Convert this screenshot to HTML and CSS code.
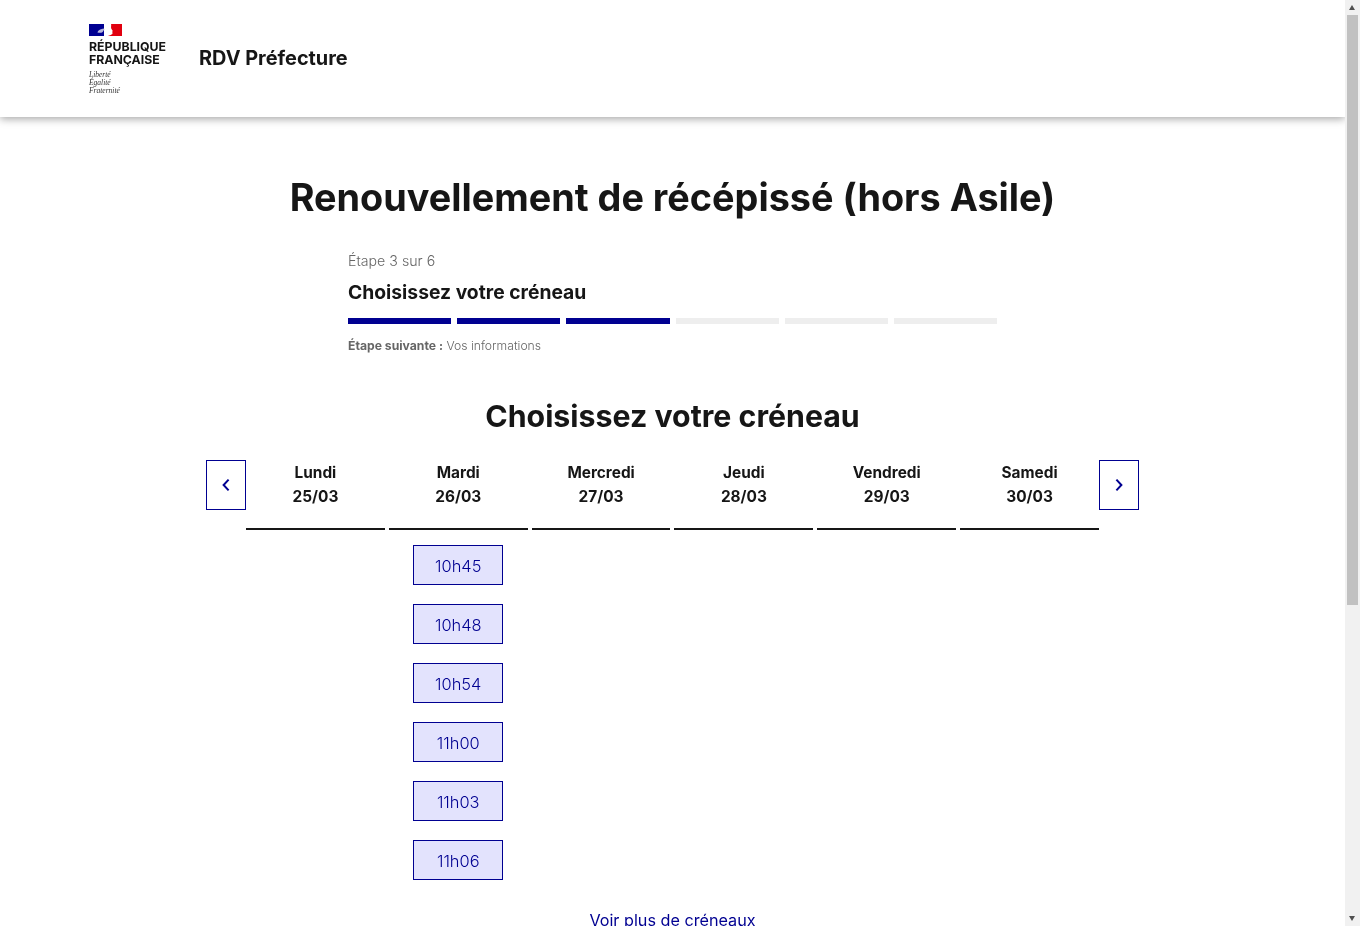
FILE: index.html
```html
<!DOCTYPE html>
<html lang="fr">
<head>
	<meta charset="utf-8">
	<meta name="viewport" content="width=device-width, initial-scale=1">
	<title>RDV Préfecture</title>
	<link rel="stylesheet" href="styles.css">
</head>
<body>
	<div class="page">
		<div class="content">
			<header class="header">
				<div class="logo">
					<svg class="flag" width="33" height="12" viewBox="0 0 33 12">
						<rect width="33" height="12" fill="#fff"/>
						<rect width="15" height="12" fill="#000091"/>
						<path d="M22 0H33V12H19C20.500 11 23.500 10.600 23.500 9.400L23.300 8.400C23.700 8.200 23.500 7.600 23.300 7.200C23.700 7 23.900 6.600 23.100 6L22.100 4.200C21.900 2.600 22.500 1 22 0Z" fill="#e1000f"/>
						<path d="M9 7.200C10 5.800 12 5 14.600 4.600L15.600 5.400C14 6.400 14.600 7.600 13 8.400C11.800 9 10 8.800 8.400 8.400Z" fill="#b5b5dc"/>
					</svg>
					<div class="logo-name">RÉPUBLIQUE<br>FRANÇAISE</div>
					<div class="logo-motto">Liberté<br>Égalité<br>Fraternité</div>
				</div>
				<div class="site-name">RDV Préfecture</div>
			</header>

			<main class="main">
				<h1 class="title">Renouvellement de récépissé (hors Asile)</h1>

				<section class="stepper">
					<div class="step-count">Étape 3 sur 6</div>
					<div class="step-title">Choisissez votre créneau</div>
					<div class="step-bars">
						<span class="bar done"></span>
						<span class="bar done"></span>
						<span class="bar done"></span>
						<span class="bar"></span>
						<span class="bar"></span>
						<span class="bar"></span>
					</div>
					<div class="step-next"><b>Étape suivante :</b> Vos informations</div>
				</section>

				<h2 class="subtitle">Choisissez votre créneau</h2>

				<section class="slots">
					<button class="nav-btn" aria-label="Précédent">
						<svg width="10" height="14" viewBox="0 0 10 14"><path d="M7.600 1.600L2.600 7L7.600 12.400" fill="none" stroke="#000091" stroke-width="2"/></svg>
					</button>
					<div class="days">
						<div class="day">
							<div class="day-head">Lundi<br>25/03</div>
						</div>
						<div class="day">
							<div class="day-head">Mardi<br>26/03</div>
							<div class="times">
								<a class="time">10h45</a>
								<a class="time">10h48</a>
								<a class="time">10h54</a>
								<a class="time">11h00</a>
								<a class="time">11h03</a>
								<a class="time">11h06</a>
							</div>
						</div>
						<div class="day">
							<div class="day-head">Mercredi<br>27/03</div>
						</div>
						<div class="day">
							<div class="day-head">Jeudi<br>28/03</div>
						</div>
						<div class="day">
							<div class="day-head">Vendredi<br>29/03</div>
						</div>
						<div class="day">
							<div class="day-head">Samedi<br>30/03</div>
						</div>
					</div>
					<button class="nav-btn" aria-label="Suivant">
						<svg width="10" height="14" viewBox="0 0 10 14"><path d="M2.400 1.600L7.400 7L2.400 12.400" fill="none" stroke="#000091" stroke-width="2"/></svg>
					</button>
				</section>

				<a class="more">Voir plus de créneaux</a>
			</main>
		</div>

		<div class="scrollbar">
			<span class="arrow up"></span>
			<span class="thumb"></span>
			<span class="arrow down"></span>
		</div>
	</div>
</body>
</html>
```

FILE: styles.css
```css
* {
	box-sizing: border-box;
}

html, body {
	margin: 0;
	height: 100%;
	overflow: hidden;
}

body {
	font-family: Inter, "Noto Sans", sans-serif;
	color: #161616;
	background: #fff;
}

.page {
	display: flex;
	height: 926px;
	overflow: hidden;
}

.content {
	flex: 1;
	min-width: 0;
	overflow: hidden;
	will-change: transform;
}

/* header */
.header {
	display: flex;
	align-items: center;
	height: 117px;
	padding-left: 89px;
	box-shadow: 0 2px 8px rgba(0, 0, 0, 0.35);
}

.logo {
	width: 110px;
	padding-top: 1px;
}

.flag {
	display: block;
	margin-bottom: 4px;
}

.logo-name {
	font-size: 12.300px;
	line-height: 13px;
	font-weight: 700;
	white-space: nowrap;
}

.logo-motto {
	margin: 5px 0 -1px;
	font-family: "Liberation Serif", serif;
	font-style: italic;
	font-size: 7.500px;
	line-height: 8px;
	color: #333;
}

.site-name {
	margin-bottom: 2px;
	font-size: 19.900px;
	font-weight: 700;
}

/* titles */
.main {
	display: flex;
	flex-direction: column;
	align-items: center;
}

.title {
	margin: 54px 0 0;
	font-size: 37.800px;
	line-height: 52px;
	font-weight: 700;
}

/* stepper */
.stepper {
	width: 649px;
	margin-top: 26px;
}

.step-count {
	font-size: 14.200px;
	line-height: 24px;
	font-weight: 300;
	color: #666;
}

.step-title {
	margin-top: 5px;
	font-size: 19.300px;
	line-height: 28px;
	font-weight: 700;
}

.step-bars {
	display: flex;
	gap: 6px;
	margin-top: 12px;
}

.bar {
	flex: 1;
	height: 6px;
	background: #eee;
}

.bar.done {
	background: #000091;
}

.step-next {
	margin-top: 12px;
	font-size: 12.200px;
	line-height: 20px;
	font-weight: 300;
	color: #666;
}

.step-next b {
	font-weight: 700;
}

.subtitle {
	margin: 40px 0 0;
	font-size: 30.300px;
	line-height: 40px;
	font-weight: 700;
}

/* slots */
.slots {
	display: flex;
	align-items: flex-start;
	width: 933px;
	margin-top: 24px;
}

.nav-btn {
	display: flex;
	align-items: center;
	justify-content: center;
	flex: none;
	width: 40px;
	height: 50px;
	padding: 0;
	background: #fff;
	border: 1px solid #000091;
}

.days {
	display: grid;
	grid-template-columns: repeat(6, 1fr);
	gap: 4px;
	flex: 1;
}

.day-head {
	height: 70px;
	padding-top: 1px;
	border-bottom: 2px solid #161616;
	font-size: 15.400px;
	line-height: 24px;
	font-weight: 700;
	text-align: center;
}

.times {
	display: flex;
	flex-direction: column;
	align-items: center;
	gap: 19px;
	margin-top: 15px;
}

.time {
	display: flex;
	align-items: center;
	justify-content: center;
	width: 90px;
	height: 40px;
	padding-top: 2px;
	border: 1px solid #000091;
	background: #e3e3fd;
	color: #000091;
	font-size: 16.400px;
	font-weight: 300;
}

.more {
	margin-top: 26px;
	color: #000091;
	font-size: 16.200px;
	line-height: 28px;
}

/* fake browser scrollbar */
.scrollbar {
	position: relative;
	flex: none;
	width: 15px;
	background: #f1f1f1;
}

.thumb {
	position: absolute;
	top: 15px;
	left: 2px;
	width: 11px;
	height: 590px;
	background: #c1c1c1;
}

.arrow {
	position: absolute;
	left: 4px;
	width: 0;
	height: 0;
	border-left: 3.500px solid transparent;
	border-right: 3.500px solid transparent;
}

.arrow.up {
	top: 5px;
	border-bottom: 5px solid #505050;
}

.arrow.down {
	bottom: 5px;
	border-top: 5px solid #505050;
}
```
